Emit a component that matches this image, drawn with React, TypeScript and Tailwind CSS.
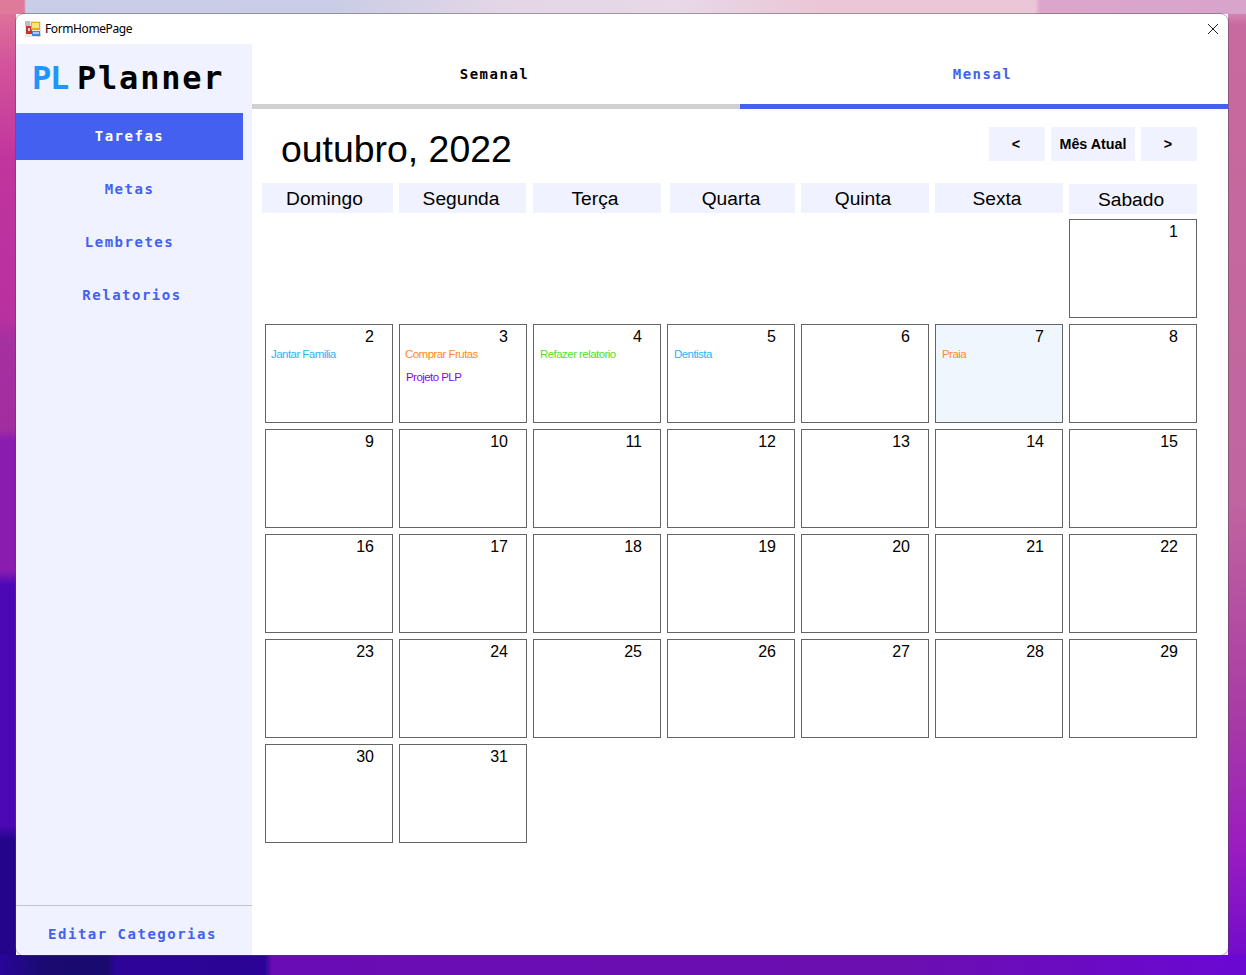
import React from "react";

const mono = "font-['DejaVu_Sans_Mono',monospace] font-bold text-[14px] tracking-[1.5px]";
const arial = "font-['Liberation_Sans',Arial,sans-serif]";

const weekdays = [
  { name: "Domingo", box: "w-[131px] pr-[6px]" },
  { name: "Segunda", box: "w-[127px] ml-[6px] pr-[3px]" },
  { name: "Terça", box: "w-[128px] ml-[7px] pr-[4px]" },
  { name: "Quarta", box: "w-[125px] ml-[9px] pr-[3px]" },
  { name: "Quinta", box: "w-[128px] ml-[6px] pr-[4px]" },
  { name: "Sexta", box: "w-[128px] ml-[6px] pr-[4px]" },
  { name: "Sabado", box: "w-[128px] ml-[6px] pr-[4px] mt-px" },
];

const events: Record<number, { label: string; color: string; indent?: string }[]> = {
  2: [{ label: "Jantar Familia", color: "text-[#29b6f6]" }],
  3: [
    { label: "Comprar Frutas", color: "text-[#ff8a24]" },
    { label: "Projeto PLP", color: "text-[#8a00ff]", indent: "ml-px" },
  ],
  4: [{ label: "Refazer relatorio", color: "text-[#52e02c]", indent: "ml-px" }],
  5: [{ label: "Dentista", color: "text-[#29b6f6]", indent: "ml-px" }],
  7: [{ label: "Praia", color: "text-[#ff8a24]", indent: "ml-px" }],
};

function TitleIcon() {
  return (
    <svg width="16" height="16" viewBox="0 0 16 16" className="shrink-0">
      <rect x="0" y="0" width="16" height="16" fill="#e8e8e8" />
      <rect x="0" y="0" width="5" height="5" fill="#bdbdbd" />
      <rect x="11" y="12" width="5" height="4" fill="#d4d4d4" />
      <rect x="1" y="5" width="6" height="8" fill="#c8322c" />
      <rect x="3" y="7" width="2" height="3" fill="#f4d0c8" />
      <rect x="6" y="1" width="9" height="8" fill="#e8a818" />
      <rect x="7" y="2" width="7" height="5" fill="#fbe27a" />
      <rect x="7" y="10" width="8" height="5" fill="#3f86e0" />
      <rect x="8" y="11" width="6" height="2" fill="#a8cdf5" />
    </svg>
  );
}

function DayCell({ day }: { day: number }) {
  const list = events[day] ?? [];
  return (
    <div className={`h-[99px] border border-[#646464] flex flex-col pl-[5px] ${day === 7 ? "bg-[#eff6fe]" : "bg-white"}`}>
      <div className={`${arial} text-[16px] leading-[18px] mt-[3px] pr-[18px] text-right text-black`}>{day}</div>
      <div className="flex flex-col gap-[9px] mt-px">
        {list.map((e) => (
          <div
            key={e.label}
            className={`${arial} text-[11.5px] leading-[14px] tracking-[-0.55px] ${e.color} ${e.indent ?? ""}`}
          >
            {e.label}
          </div>
        ))}
      </div>
    </div>
  );
}

export default function App() {
  const days = Array.from({ length: 31 }, (_, i) => i + 1);

  return (
    <div className="w-[1246px] h-[975px] overflow-hidden pt-[14px] pl-[16px] [background:linear-gradient(90deg,#e07a9a_0,#e07a9a_24px,#c9cde8_26px,#cbcde6_340px,#e3d6e6_500px,#e8d8e8_680px,#ebc6d6_820px,#ebc6d6_1035px,#dca6cc_1040px,#d8a4cc_100%)_0_0/100%_14px_no-repeat,linear-gradient(90deg,#28069a_0,#1b0a72_40px,#180a6e_108px,#2e0498_115px,#2a0496_265px,#6a0cb5_272px,#6a0fb0_900px,#6a08d4_100%)_0_100%/100%_20px_no-repeat,linear-gradient(180deg,#e07a9a_0,#d4559a_60px,#c0359e_160px,#b8309f_320px,#a5309f_340px,#a22da0_430px,#8a1db0_440px,#8a1db0_570px,#4d08b5_585px,#4d08b5_825px,#22058a_840px,#22058a_100%)_0_0/16px_100%_no-repeat,linear-gradient(180deg,#dca6cc_0,#c86a9f_25px,#c0659f_500px,#a83aa5_720px,#9a1cc0_850px,#6b09cc_100%)_100%_0/18px_100%_no-repeat]">
      <div className="w-[1212px] h-[941px] rounded-[8px] overflow-hidden bg-white flex flex-col shadow-[0_0_0_1px_rgba(70,70,80,0.45)]">
        {/* Title bar */}
        <div className="h-[30px] shrink-0 flex items-center pl-[9px] pr-[9px]">
          <TitleIcon />
          <span className="ml-[4px] font-['Noto_Sans',sans-serif] text-[12px] tracking-[-0.4px] text-black">FormHomePage</span>
          <svg width="12" height="12" viewBox="0 0 12 12" className="ml-auto" fill="none" stroke="#222" strokeWidth="1">
            <path d="M1 1l10 10M11 1L1 11" />
          </svg>
        </div>

        <div className="flex flex-1 min-h-0">
          {/* Sidebar */}
          <aside className="w-[236px] shrink-0 bg-[#f0f3ff] flex flex-col">
            <div className="h-[69px] shrink-0 flex items-center pl-[16px] pb-px font-['DejaVu_Sans_Mono',monospace] font-bold text-[32px]">
              <span className="text-[#1e96fc] tracking-[-1.3px]">PL</span>
              <span className="ml-[9px] text-black tracking-[1.8px]">Planner</span>
            </div>
            <nav className="flex flex-col gap-[6px] w-[227px]">
              <div className={`h-[47px] bg-[#4361ee] text-white flex items-center justify-center ${mono}`}>Tarefas</div>
              <div className={`h-[47px] text-[#4361ee] flex items-center justify-center ${mono}`}>Metas</div>
              <div className={`h-[47px] text-[#4361ee] flex items-center justify-center ${mono}`}>Lembretes</div>
              <div className={`h-[47px] text-[#4361ee] flex items-center justify-center pl-[5px] ${mono}`}>Relatorios</div>
            </nav>
            <div className={`mt-auto h-[50px] border-t border-[#c4c4c8] text-[#4361ee] flex items-center justify-center pt-[7px] pr-[3px] ${mono}`}>
              Editar Categorias
            </div>
          </aside>

          {/* Main */}
          <main className="flex-1 min-w-0 flex flex-col">
            <div className="flex shrink-0">
              <div className="w-[488px] h-[65px] border-b-[5px] border-[#d0d0d0] flex items-center justify-center pr-[3px] pt-px text-black">
                <span className={mono}>Semanal</span>
              </div>
              <div className="w-[488px] h-[65px] border-b-[5px] border-[#4361ee] flex items-center justify-center pr-[3px] pt-px text-[#4361ee]">
                <span className={mono}>Mensal</span>
              </div>
            </div>

            <div className="flex items-start mt-[18px] pl-[29px]">
              <h1 className={`${arial} text-[37.4px] leading-[44px] text-black font-normal`}>outubro, 2022</h1>
              <div className={`ml-auto mr-[31px] flex gap-[6px] ${arial} text-[14.3px] font-bold text-black`}>
                <button className="w-[56px] h-[34px] bg-[#f0f3ff] pr-[2px] pt-[2px]">&lt;</button>
                <button className="w-[84px] h-[34px] bg-[#f0f3ff] pt-[2px]">Mês Atual</button>
                <button className="w-[56px] h-[34px] bg-[#f0f3ff] pr-[2px] pt-[2px]">&gt;</button>
              </div>
            </div>

            <div className="flex items-start mt-[12px] pl-[10px]">
              {weekdays.map((w) => (
                <div
                  key={w.name}
                  className={`h-[30px] bg-[#f0f3ff] flex items-center justify-center pt-[2px] ${arial} text-[19.2px] text-black ${w.box}`}
                >
                  {w.name}
                </div>
              ))}
            </div>

            <div className="grid grid-cols-[repeat(7,128px)] gap-[6px] mt-[5px] pl-[13px]">
              <div className="col-start-7">
                <DayCell day={1} />
              </div>
              {days.slice(1).map((d) => (
                <DayCell key={d} day={d} />
              ))}
            </div>
          </main>
        </div>
      </div>
    </div>
  );
}
